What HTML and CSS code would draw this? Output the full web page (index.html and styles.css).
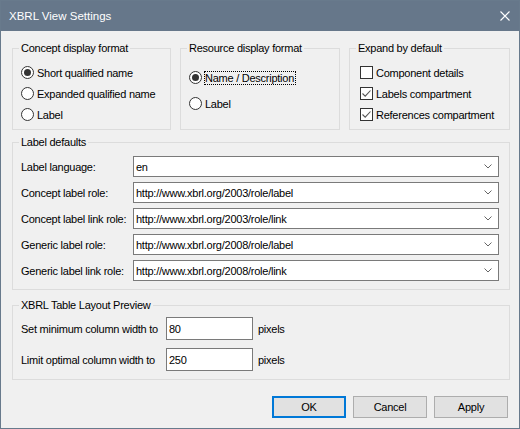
FILE: index.html
```html
<!DOCTYPE html>
<html lang="en">
<head>
    <meta charset="UTF-8">
    <title>XBRL View Settings</title>
    <link rel="stylesheet" href="styles.css">
</head>
<body>
    <div class="window">
        <div class="titlebar">
            <span class="title">XBRL View Settings</span>
            <svg class="close" width="10" height="10" viewBox="0 0 10 10">
                <path d="M0.5 0.5 L9.5 9.5 M9.5 0.5 L0.5 9.5" stroke="#fff" stroke-width="1.1" fill="none"/>
            </svg>
        </div>

        <div class="content">
            <div class="top-row">
                <fieldset class="group">
                    <legend>Concept display format</legend>
                    <div class="options">
                        <label class="option"><span class="radio checked"></span>Short qualified name</label>
                        <label class="option"><span class="radio"></span>Expanded qualified name</label>
                        <label class="option"><span class="radio"></span>Label</label>
                    </div>
                </fieldset>

                <fieldset class="group">
                    <legend>Resource display format</legend>
                    <div class="options options-loose">
                        <label class="option"><span class="radio checked"></span><span class="focus">Name / Description</span></label>
                        <label class="option"><span class="radio"></span>Label</label>
                    </div>
                </fieldset>

                <fieldset class="group group-expand">
                    <legend>Expand by default</legend>
                    <div class="options">
                        <label class="option"><span class="check"></span>Component details</label>
                        <label class="option">
                            <span class="check">
                                <svg width="11" height="11" viewBox="0 0 11 11"><path d="M1.5 5.5 L4.2 8.2 L9.5 2.5" stroke="#555" stroke-width="1.1" fill="none"/></svg>
                            </span>Labels compartment
                        </label>
                        <label class="option">
                            <span class="check">
                                <svg width="11" height="11" viewBox="0 0 11 11"><path d="M1.5 5.5 L4.2 8.2 L9.5 2.5" stroke="#555" stroke-width="1.1" fill="none"/></svg>
                            </span>References compartment
                        </label>
                    </div>
                </fieldset>
            </div>

            <fieldset class="group label-defaults">
                <legend>Label defaults</legend>
                <div class="field-grid">
                    <label>Label language:</label>
                    <div class="combo"><span>en</span><svg width="8" height="5" viewBox="0 0 8 5"><path d="M0.5 0.5 L4 4 L7.5 0.5" stroke="#666" fill="none"/></svg></div>

                    <label>Concept label role:</label>
                    <div class="combo"><span>http://www.xbrl.org/2003/role/label</span><svg width="8" height="5" viewBox="0 0 8 5"><path d="M0.5 0.5 L4 4 L7.5 0.5" stroke="#666" fill="none"/></svg></div>

                    <label>Concept label link role:</label>
                    <div class="combo"><span>http://www.xbrl.org/2003/role/link</span><svg width="8" height="5" viewBox="0 0 8 5"><path d="M0.5 0.5 L4 4 L7.5 0.5" stroke="#666" fill="none"/></svg></div>

                    <label>Generic label role:</label>
                    <div class="combo"><span>http://www.xbrl.org/2008/role/label</span><svg width="8" height="5" viewBox="0 0 8 5"><path d="M0.5 0.5 L4 4 L7.5 0.5" stroke="#666" fill="none"/></svg></div>

                    <label>Generic label link role:</label>
                    <div class="combo"><span>http://www.xbrl.org/2008/role/link</span><svg width="8" height="5" viewBox="0 0 8 5"><path d="M0.5 0.5 L4 4 L7.5 0.5" stroke="#666" fill="none"/></svg></div>
                </div>
            </fieldset>

            <fieldset class="group layout-preview">
                <legend>XBRL Table Layout Preview</legend>
                <div class="width-grid">
                    <label>Set minimum column width to</label>
                    <input type="text" value="80">
                    <span>pixels</span>

                    <label>Limit optimal column width to</label>
                    <input type="text" value="250">
                    <span>pixels</span>
                </div>
            </fieldset>

            <div class="buttons">
                <button class="default">OK</button>
                <button>Cancel</button>
                <button>Apply</button>
            </div>
        </div>
    </div>
</body>
</html>
```

FILE: styles.css
```css
body {
    margin: 0;
    font-family: "Liberation Sans", Arial, sans-serif;
    font-size: 11px;
    letter-spacing: -0.25px;
    color: #000;
    background-color: #f0f0f0;
}

.window {
    width: 520px;
    height: 429px;
    box-sizing: border-box;
    border: 1px solid #687a8c;
    background-color: #f0f0f0;
}

.titlebar {
    height: 30px;
    background-color: #66778a;
    color: #fff;
    display: flex;
    align-items: center;
    justify-content: space-between;
    padding: 0 9px 0 8px;
}

.title {
    font-size: 11.5px;
    letter-spacing: 0;
}

.content {
    padding: 10px 9px 0 11px;
}

.top-row {
    display: grid;
    grid-template-columns: 159px 160px 161px;
    column-gap: 9px;
}

.group {
    margin: 0;
    min-width: 0;
    border: 1px solid #dcdcdc;
    padding: 6px 8px 4px 8px;
}

.group legend {
    line-height: 15px;
    padding: 0 2px;
    margin-left: -2px;
}

.group-expand {
    padding-left: 10px;
}

.group-expand legend {
    margin-left: -4px;
}

.options {
    display: flex;
    flex-direction: column;
}

.options-loose {
    padding-top: 5px;
    gap: 5px;
}

.option {
    display: flex;
    align-items: center;
    gap: 3px;
    height: 21px;
    white-space: nowrap;
}

.radio {
    width: 13px;
    height: 13px;
    box-sizing: border-box;
    border: 1px solid #333;
    border-radius: 50%;
    background-color: #fff;
    display: flex;
    align-items: center;
    justify-content: center;
}

.radio.checked::after {
    content: "";
    width: 7px;
    height: 7px;
    border-radius: 50%;
    background-color: #333;
}

.focus {
    border: 1px dotted #000;
    margin-left: -1px;
    padding-right: 1px;
    line-height: 12px;
}

.check {
    width: 13px;
    height: 13px;
    box-sizing: border-box;
    border: 1px solid #333;
    background-color: #fff;
    display: flex;
}

.label-defaults {
    margin-top: 5px;
    padding: 6px 10px 8px 8px;
}

.field-grid {
    display: grid;
    grid-template-columns: 112px 1fr;
    row-gap: 5px;
    align-items: center;
}

.field-grid label {
    white-space: nowrap;
}

.combo {
    height: 21px;
    box-sizing: border-box;
    border: 1px solid #7a7a7a;
    background-color: #fff;
    display: flex;
    align-items: center;
    justify-content: space-between;
    padding: 0 6px 0 2px;
}

.layout-preview {
    margin-top: 8px;
    padding: 4px 10px 8px 8px;
}

.width-grid {
    display: grid;
    grid-template-columns: 140px 87px auto;
    column-gap: 5px;
    row-gap: 8px;
    align-items: center;
}

.width-grid label {
    white-space: nowrap;
}

.width-grid input {
    height: 23px;
    box-sizing: border-box;
    border: 1px solid #7a7a7a;
    padding: 0 2px;
    margin: 0;
    font-family: inherit;
    font-size: 11px;
    letter-spacing: inherit;
    background-color: #fff;
}

.buttons {
    display: flex;
    justify-content: flex-end;
    gap: 7px;
    margin-top: 16px;
    padding-right: 2px;
}

button {
    width: 74px;
    height: 22px;
    box-sizing: border-box;
    border: 1px solid #adadad;
    background-color: #e1e1e1;
    font-family: inherit;
    font-size: 11px;
    letter-spacing: inherit;
    color: #000;
    padding: 0;
}

button.default {
    border: 2px solid #0078d7;
}
```
